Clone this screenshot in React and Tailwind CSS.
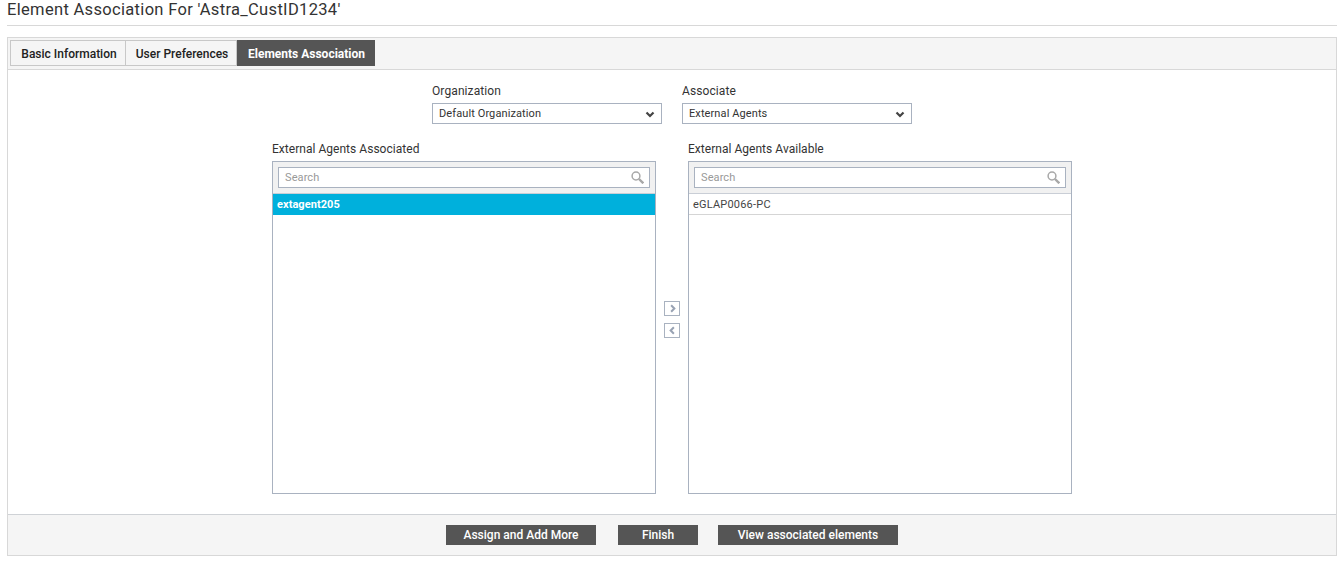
import React from "react";

function Chevron({ dir, size = 12, className }) {
  const d = { down: "M2.5 4.5l3.5 3.5 3.5-3.5", right: "M4.5 2.5l3.5 3.5-3.5 3.5", left: "M7.5 2.5l-3.5 3.5 3.5 3.5" }[dir];
  return (
    <svg width={size} height={size} viewBox="0 0 12 12" fill="none" className={className}>
      <path d={d} stroke="currentColor" strokeWidth="2.2" />
    </svg>
  );
}

function SearchGlyph() {
  return (
    <svg width="13" height="13" viewBox="0 0 13 13" fill="none" className="text-[#a8a8a8]">
      <circle cx="5" cy="5" r="3.9" stroke="currentColor" strokeWidth="1.5" />
      <path d="M8 8l4.3 4.3" stroke="currentColor" strokeWidth="2.4" />
    </svg>
  );
}

function Select({ label, value }) {
  return (
    <div className="flex flex-col w-[230px]">
      <label className="text-[12px] tracking-[0.1px] pt-[1px] leading-[15px] text-[#333] mb-[4px]">{label}</label>
      <div className="h-[21px] border border-[#a9b2c0] bg-white flex items-center justify-between pl-[6px] pr-[5px] text-[11px] tracking-[0.1px] text-[#333]">
        <span className="pt-[1px] mt-[1px]">{value}</span>
        <Chevron dir="down" className="text-[#444]" />
      </div>
    </div>
  );
}

function ListBox({ label, item, selected }) {
  return (
    <div className="flex flex-col w-[384px]">
      <div className="text-[12px] tracking-[0.03px] pt-[1px] leading-[15px] text-[#333] mb-[4px]">{label}</div>
      <div className="h-[333px] border border-[#a9b2c0] bg-white flex flex-col">
        <div className="h-[32px] shrink-0 bg-[#f1f1f1] border-b border-[#c9ced6] px-[5px] pt-[5px]">
          <div className="h-[21px] bg-white border border-[#a9b2c0] flex items-center justify-between pl-[6px] pr-[5px]">
            <span className="text-[11px] tracking-[0.1px] pt-[2px] text-[#999]">Search</span>
            <SearchGlyph />
          </div>
        </div>
        <div
          className={
            selected
              ? "h-[21px] bg-[#00b0dc] flex items-center px-[4px] pt-[2px] text-[11px] tracking-[0.05px] font-bold text-white"
              : "h-[21px] bg-white border-b border-[#d5d5d5] flex items-center px-[4px] pt-[2px] text-[11px] tracking-[0.2px] text-[#444]"
          }
        >
          {item}
        </div>
      </div>
    </div>
  );
}

function Arrow({ dir }) {
  return (
    <div className="w-[16px] h-[15px] border border-[#a9b2c0] bg-white flex items-center justify-center text-[#98a2b3]">
      <Chevron dir={dir} size={11} />
    </div>
  );
}

function Btn({ className, children }) {
  return (
    <button className={`${className} h-[20px] bg-[#555555] text-white text-[12px] font-medium flex items-center justify-center`}>
      {children}
    </button>
  );
}

export default function App() {
  return (
    <div className="h-[565px] bg-white px-[7px] font-['Roboto',sans-serif] overflow-hidden">
      <div className="h-[26px] border-b border-[#d8d8d8] pt-[1px] text-[16.5px] leading-[18px] text-[#333] tracking-[0.32px]">
        Element Association For 'Astra_CustID1234'
      </div>
      <div className="mt-[11px] border border-[#d8d8d8]">
        <div className="h-[32px] bg-[#f5f5f5] border-b border-[#d8d8d8] pt-[2px] pl-[2px] flex items-start">
          <div className="h-[26px] w-[116px] border border-[#c8c8c8] pl-[2px] pt-[1px] flex items-center justify-center text-[12px] font-medium text-[#222]">
            Basic Information
          </div>
          <div className="h-[26px] w-[111px] border-y border-r border-[#c8c8c8] pl-[2px] pt-[1px] flex items-center justify-center text-[12px] font-medium text-[#222]">
            User Preferences
          </div>
          <div className="h-[26px] w-[138px] bg-[#555555] pl-[1px] pt-[1px] flex items-center justify-center text-[12px] font-bold text-white">
            Elements Association
          </div>
        </div>
        <div className="h-[444px] pt-[13px] flex flex-col items-center">
          <div className="flex gap-[20px]">
            <Select label="Organization" value="Default Organization" />
            <Select label="Associate" value="External Agents" />
          </div>
          <div className="mt-[17px] flex gap-[8px]">
            <ListBox label="External Agents Associated" item="extagent205" selected />
            <div className="w-[16px] flex flex-col items-center gap-[7px] pt-[160px]">
              <Arrow dir="right" />
              <Arrow dir="left" />
            </div>
            <ListBox label="External Agents Available" item="eGLAP0066-PC" />
          </div>
        </div>
        <div className="h-[41px] bg-[#f5f5f5] border-t border-[#cfd2d6] pt-[10px] flex justify-center">
          <Btn className="w-[150px] mr-[22px]">Assign and Add More</Btn>
          <Btn className="w-[80px] mr-[20px]">Finish</Btn>
          <Btn className="w-[180px]">View associated elements</Btn>
        </div>
      </div>
    </div>
  );
}
